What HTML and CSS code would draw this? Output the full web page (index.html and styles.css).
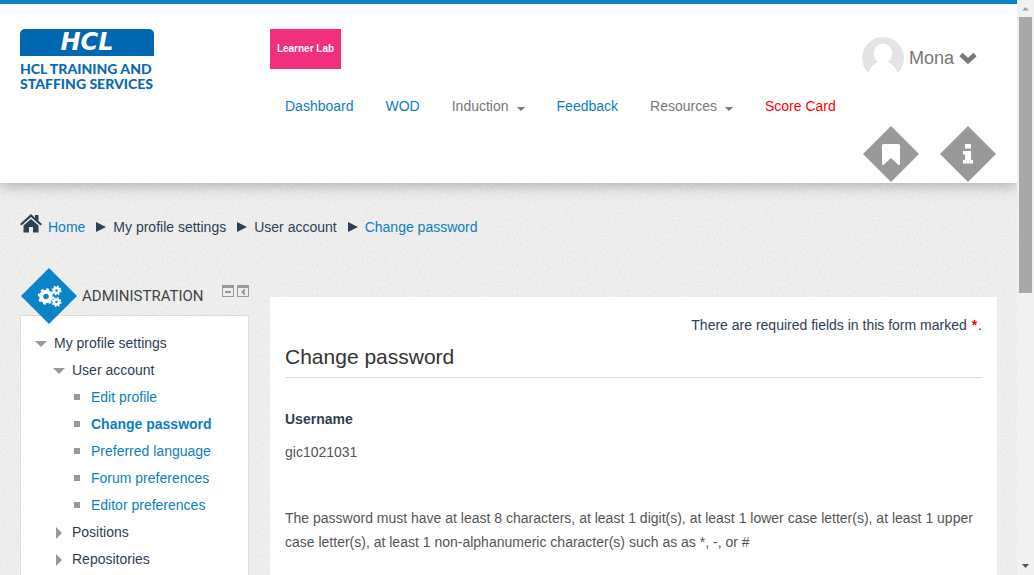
FILE: index.html
```html
<!DOCTYPE html>
<html lang="en">
<head>
<meta charset="utf-8">
<meta name="viewport" content="width=device-width, initial-scale=1">
<title>Change password</title>
<link rel="stylesheet" href="styles.css">
</head>
<body>
<div class="viewport">
  <div class="page">
    <header class="site-header">
      <a class="logo" href="#" aria-label="HCL Training and Staffing Services">
        <span class="logo-mark">HCL</span>
        <span class="logo-line">HCL TRAINING AND</span>
        <span class="logo-line">STAFFING SERVICES</span>
      </a>
      <div class="header-main">
        <button class="lab-button" type="button">Learner Lab</button>
        <nav class="main-nav">
          <a href="#">Dashboard</a>
          <a href="#">WOD</a>
          <a class="muted" href="#">Induction<span class="caret"></span></a>
          <a href="#">Feedback</a>
          <a class="muted" href="#">Resources<span class="caret"></span></a>
          <a class="alert" href="#">Score Card</a>
        </nav>
      </div>
      <div class="header-user">
        <button class="user-menu" type="button">
          <svg width="42" height="42" viewBox="0 0 42 42" aria-hidden="true">
            <defs><clipPath id="face"><circle cx="21" cy="21" r="21"/></clipPath></defs>
            <g clip-path="url(#face)"><rect width="42" height="36" fill="#e4e4e4"/><ellipse cx="21" cy="16.500" rx="9.300" ry="10" fill="#fff"/><path d="M6 37Q9 28 16 25L21 24L26 25Q33 28 36 37V42H6Z" fill="#fff"/></g>
          </svg>
          <span>Mona</span>
          <svg width="18" height="12" viewBox="0 0 18 12" aria-hidden="true"><path d="M2 2.500L9 9L16 2.500" fill="none" stroke="#777" stroke-width="4.600"/></svg>
        </button>
        <div class="quick-links">
          <a href="#" aria-label="Bookmarks"><svg width="56" height="56" viewBox="0 0 56 56"><path d="M28 0L56 28L28 56L0 28Z" fill="#999"/><path d="M20.500 18H35.500Q37 18 37 19.500V38.500L35.500 39L28 32L20.500 39L19 38.500V19.500Q19 18 20.500 18Z" fill="#fff"/></svg></a>
          <a href="#" aria-label="Information"><svg width="56" height="56" viewBox="0 0 56 56"><path d="M28 0L56 28L28 56L0 28Z" fill="#999"/><path d="M25 18H31V22.500H25ZM23 25H31V34H33V37.500H23V34H25V28.500H23Z" fill="#fff"/></svg></a>
        </div>
      </div>
    </header>

    <nav class="breadcrumb" aria-label="Breadcrumb">
      <svg class="home-icon" width="22" height="20" viewBox="0 0 22 20" aria-hidden="true"><path d="M0 10L11 0L15 3.700V1H18.500V7L22 10L20.500 11.500L11 3L1.500 11.500Z" fill="#2f4052"/><path d="M3.500 11.500L11 5L18.500 11.500V18.500H13V13H9V18.500H3.500Z" fill="#2f4052"/></svg>
      <a href="#">Home</a>
      <span class="arrow"></span><span>My profile settings</span>
      <span class="arrow"></span><span>User account</span>
      <span class="arrow"></span><a href="#">Change password</a>
    </nav>

    <div class="columns">
      <aside class="block">
        <div class="block-head">
          <svg width="56" height="56" viewBox="0 0 56 56" aria-hidden="true">
            <path d="M28 0L56 28L28 56L0 28Z" fill="#0a84c6"/>
            <g fill="none" stroke="#fff">
              <circle cx="25" cy="28.500" r="4.800" stroke-width="4"/>
              <circle cx="25" cy="28.500" r="7.200" stroke-width="2" stroke-dasharray="2.830 2.830"/>
              <circle cx="35.500" cy="22.500" r="2.500" stroke-width="2.400"/>
              <circle cx="35.500" cy="22.500" r="4.200" stroke-width="1.600" stroke-dasharray="1.650 1.650"/>
              <circle cx="35.500" cy="34" r="2.500" stroke-width="2.400"/>
              <circle cx="35.500" cy="34" r="4.200" stroke-width="1.600" stroke-dasharray="1.650 1.650"/>
            </g>
          </svg>
          <h2>ADMINISTRATION</h2>
          <div class="block-actions">
            <button type="button" aria-label="Hide block"><svg width="12" height="12" viewBox="0 0 12 12"><path d="M0 0H12V12H0ZM1 3V11H11V3Z" fill="#999" fill-rule="evenodd"/><path d="M3 6H9V8H3Z" fill="#999"/></svg></button>
            <button type="button" aria-label="Dock block"><svg width="12" height="12" viewBox="0 0 12 12"><path d="M0 0H12V12H0ZM1 3V11H11V3Z" fill="#999" fill-rule="evenodd"/><path d="M7 4H8V6L7 7L8 8V10H7L4 7Z" fill="#999"/></svg></button>
          </div>
        </div>
        <div class="block-body">
          <ul class="tree">
            <li><span class="node"><i class="open"></i>My profile settings</span>
              <ul>
                <li><span class="node"><i class="open"></i>User account</span>
                  <ul>
                    <li><a class="node" href="#"><i class="leaf"></i>Edit profile</a></li>
                    <li><a class="node current" href="#"><i class="leaf"></i>Change password</a></li>
                    <li><a class="node" href="#"><i class="leaf"></i>Preferred language</a></li>
                    <li><a class="node" href="#"><i class="leaf"></i>Forum preferences</a></li>
                    <li><a class="node" href="#"><i class="leaf"></i>Editor preferences</a></li>
                  </ul>
                </li>
                <li><span class="node"><i class="closed"></i>Positions</span></li>
                <li><span class="node"><i class="closed"></i>Repositories</span></li>
              </ul>
            </li>
          </ul>
        </div>
      </aside>

      <main class="panel">
        <p class="required-note">There are required fields in this form marked <span class="star">*</span>.</p>
        <h1>Change password</h1>
        <dl class="field">
          <dt>Username</dt>
          <dd>gic1021031</dd>
        </dl>
        <p class="policy">The password must have at least 8 characters, at least 1 digit(s), at least 1 lower case letter(s), at least 1 upper case letter(s), at least 1 non-alphanumeric character(s) such as as *, -, or #</p>
      </main>
    </div>
  </div>

  <div class="scrollbar" aria-hidden="true">
    <svg width="17" height="17" viewBox="0 0 17 17"><path d="M5 10.500L8.500 7L12 10.500Z" fill="#a0a0a0"/></svg>
    <div class="track"><div class="thumb"></div></div>
    <svg width="17" height="17" viewBox="0 0 17 17"><path d="M5 6H12L8.500 10Z" fill="#505050"/></svg>
  </div>
</div>
</body>
</html>
```

FILE: styles.css
```css
* { box-sizing: border-box; }

body {
  margin: 0;
  font: 14px/20px "Liberation Sans", Arial, sans-serif;
  color: #2f4052;
}

a { color: #0a7fc0; text-decoration: none; }
button { border: 0; padding: 0; background: none; font: inherit; color: inherit; }
svg { display: block; flex: none; }
h1, h2, p, dl, dd, ul { margin: 0; padding: 0; }

.viewport { display: flex; height: 100vh; overflow: hidden; }

.page {
  flex: 1;
  min-width: 0;
  overflow: hidden;
  background-color: #f2f2f2;
  background-image: url("data:image/svg+xml,%3Csvg xmlns='http://www.w3.org/2000/svg' width='200' height='200'%3E%3Cfilter id='n'%3E%3CfeTurbulence type='fractalNoise' baseFrequency='0.5' numOctaves='2' stitchTiles='stitch'/%3E%3CfeColorMatrix values='0 0 0 0 0 0 0 0 0 0 0 0 0 0 0 0.08 0 0 0 -0.02'/%3E%3C/filter%3E%3Crect width='200' height='200' filter='url(%23n)'/%3E%3C/svg%3E");
}

.site-header {
  display: grid;
  grid-template-columns: 229px 1fr auto;
  column-gap: 21px;
  padding: 25px 20px 1px;
  border-top: 4px solid #0a84c6;
  background: #fff;
  box-shadow: 0 2px 14px rgba(0, 0, 0, 0.3);
}

.logo { justify-self: start; width: 134px; color: #0b69b3; }
.logo-mark {
  display: block;
  margin-bottom: 5px;
  border-radius: 5px 5px 0 0;
  background: #0067b1;
  color: #fff;
  font: italic bold 24px/27px "DejaVu Sans", sans-serif;
  text-align: center;
}
.logo-line {
  display: block;
  font: 900 14px/15px Lato, sans-serif;
  white-space: nowrap;
}

.lab-button {
  display: block;
  width: 71px;
  height: 40px;
  background: #f22e7e;
  color: #fff;
  font-size: 10px;
  font-weight: bold;
}

.main-nav { display: flex; gap: 32px; margin: 27px 0 0 15px; white-space: nowrap; }
.main-nav .muted { color: #777; }
.main-nav .alert { color: #f00; }
.caret {
  display: inline-block;
  margin-left: 8px;
  border: 4px solid transparent;
  border-top-color: #777;
  border-bottom: 0;
}

.header-user { padding-top: 8px; }
.user-menu { display: flex; align-items: center; gap: 5px; color: #777; font-size: 18px; }
.quick-links { display: flex; gap: 21px; justify-content: flex-end; margin: 47px 1px 0; }

.breadcrumb { display: flex; align-items: center; padding: 31px 20px 0; line-height: 24px; }
.home-icon { margin: 0 6px 5px 0; }
.arrow {
  margin: 0 7px 0 11px;
  border: 5px solid transparent;
  border-left: 10px solid #2f4052;
  border-right: 0;
}

.columns { display: flex; align-items: flex-start; gap: 21px; padding: 29px 20px 0; }

.block { flex: none; width: 229px; }
.block-head { display: flex; align-items: center; position: relative; margin-bottom: -9px; padding-left: 1px; }
.block-head h2 {
  margin-left: 5px;
  color: #444;
  font: 15px/24px Roboto, "Liberation Sans", sans-serif;
}
.block-actions { display: flex; gap: 3px; margin: 0 0 11px auto; }

.block-body { padding: 14px; border: 1px solid #ddd; background: #fff; }
.tree, .tree ul { list-style: none; }
.tree ul { padding-left: 18px; }
.node { display: flex; align-items: center; line-height: 27px; }
.current { font-weight: bold; }
.open { margin-right: 7px; border: 6px solid transparent; border-top-color: #999; border-bottom: 0; }
.closed { margin: 0 10px 0 3px; border: 6px solid transparent; border-left-color: #999; border-right: 0; }
.leaf { width: 6px; height: 6px; margin: 0 11px 2px 3px; background: #999; }

.panel { flex: 1; min-width: 0; min-height: 100vh; margin-top: 29px; padding: 18px 15px; background: #fff; }
.required-note { text-align: right; }
.star { padding: 0 1px; color: #f00; font-weight: bold; }
.panel h1 {
  padding: 7px 0 5px;
  border-bottom: 1px solid #ddd;
  color: #333;
  font-size: 21px;
  font-weight: normal;
  line-height: 30px;
}
.field { padding: 29px 0 42px; }
.field dt { font-weight: bold; line-height: 24px; }
.field dd { padding-top: 9px; color: #555; line-height: 24px; }
.policy { color: #555; line-height: 24px; }

.scrollbar { display: flex; flex-direction: column; flex: none; width: 17px; background: #f1f1f1; }
.track { flex: 1; padding: 0 2px; }
.thumb { height: 51%; background: #a8a8a8; }
```
